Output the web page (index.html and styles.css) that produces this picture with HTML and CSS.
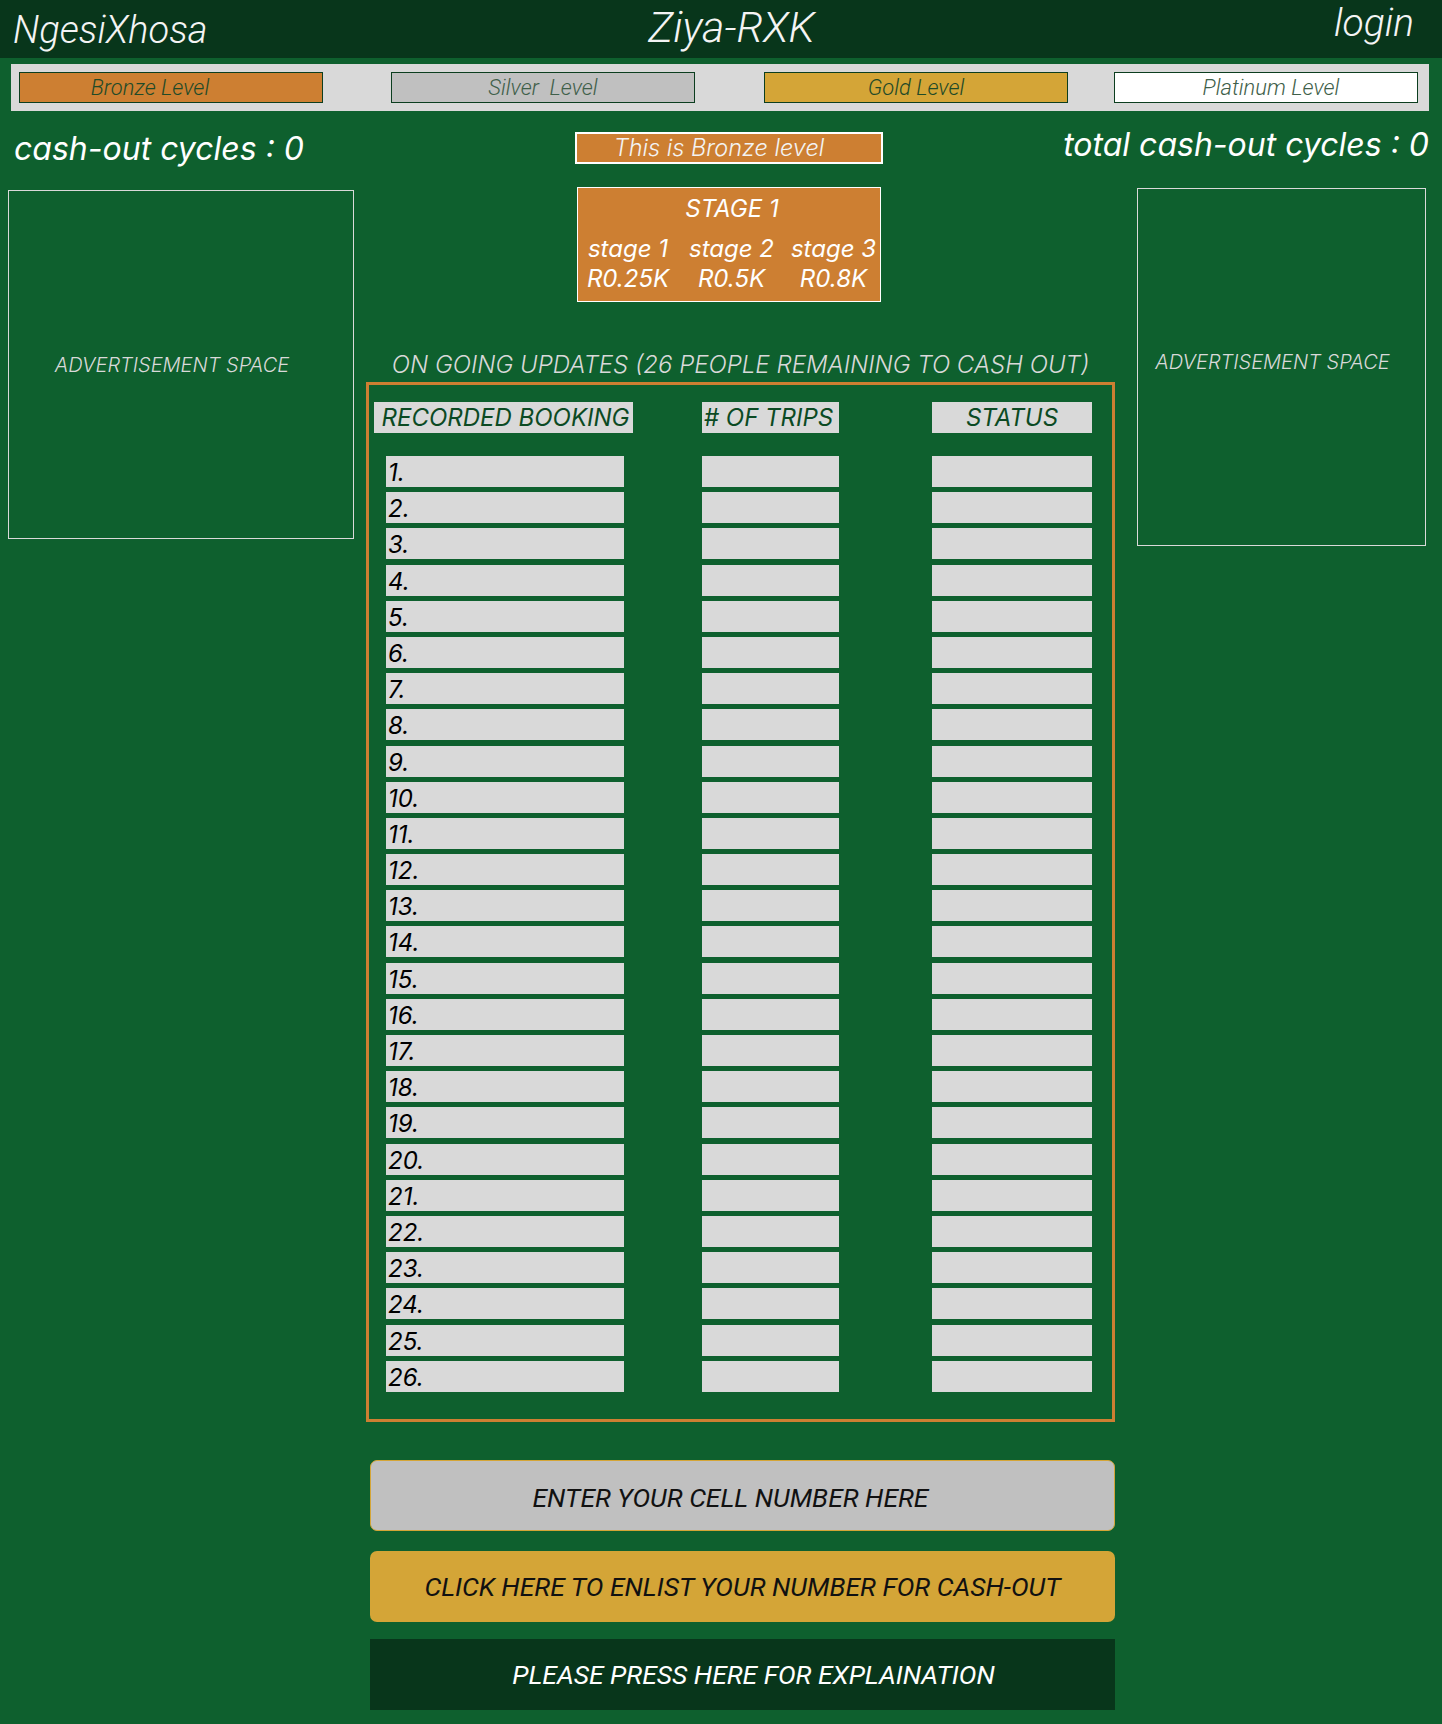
FILE: index.html
```html
<!DOCTYPE html>
<html lang="en">
<head>
<meta charset="utf-8">
<title>Ziya-RXK</title>
<link rel="stylesheet" href="styles.css">
</head>
<body>
<header class="topbar">
  <div class="brand">NgesiXhosa</div>
  <div class="title">Ziya-RXK</div>
  <div class="login">login</div>
</header>

<nav class="levels">
  <div class="level bronze">Bronze Level</div>
  <div class="level silver">Silver&nbsp; Level</div>
  <div class="level gold">Gold Level</div>
  <div class="level platinum">Platinum Level</div>
</nav>

<main class="layout">
  <div class="cycles">cash-out cycles : 0</div>
  <div class="center-top"><div class="level-note">This is Bronze level</div></div>
  <div class="total-wrap"><div class="cycles total">total cash-out cycles : 0</div></div>

  <aside class="ad ad-left">ADVERTISEMENT SPACE</aside>

  <section class="center">
    <div class="stage">
      <div class="stage-title">STAGE 1</div>
      <div class="stage-grid">
        <div>stage 1<br>R0.25K</div>
        <div>stage 2<br>R0.5K</div>
        <div>stage 3<br>R0.8K</div>
      </div>
    </div>

    <h2 class="updates">ON GOING UPDATES (26 PEOPLE REMAINING TO CASH OUT)</h2>

    <div class="board">
      <div class="head-row">
        <div class="hc hc1">RECORDED BOOKING</div>
        <div class="hc hc2"># OF TRIPS</div>
        <div class="hc hc3">STATUS</div>
      </div>
      <div class="rows">
        <div class="row"><div class="c c1">1.</div><div class="c c2"></div><div class="c c3"></div></div>
        <div class="row"><div class="c c1">2.</div><div class="c c2"></div><div class="c c3"></div></div>
        <div class="row"><div class="c c1">3.</div><div class="c c2"></div><div class="c c3"></div></div>
        <div class="row"><div class="c c1">4.</div><div class="c c2"></div><div class="c c3"></div></div>
        <div class="row"><div class="c c1">5.</div><div class="c c2"></div><div class="c c3"></div></div>
        <div class="row"><div class="c c1">6.</div><div class="c c2"></div><div class="c c3"></div></div>
        <div class="row"><div class="c c1">7.</div><div class="c c2"></div><div class="c c3"></div></div>
        <div class="row"><div class="c c1">8.</div><div class="c c2"></div><div class="c c3"></div></div>
        <div class="row"><div class="c c1">9.</div><div class="c c2"></div><div class="c c3"></div></div>
        <div class="row"><div class="c c1">10.</div><div class="c c2"></div><div class="c c3"></div></div>
        <div class="row"><div class="c c1">11.</div><div class="c c2"></div><div class="c c3"></div></div>
        <div class="row"><div class="c c1">12.</div><div class="c c2"></div><div class="c c3"></div></div>
        <div class="row"><div class="c c1">13.</div><div class="c c2"></div><div class="c c3"></div></div>
        <div class="row"><div class="c c1">14.</div><div class="c c2"></div><div class="c c3"></div></div>
        <div class="row"><div class="c c1">15.</div><div class="c c2"></div><div class="c c3"></div></div>
        <div class="row"><div class="c c1">16.</div><div class="c c2"></div><div class="c c3"></div></div>
        <div class="row"><div class="c c1">17.</div><div class="c c2"></div><div class="c c3"></div></div>
        <div class="row"><div class="c c1">18.</div><div class="c c2"></div><div class="c c3"></div></div>
        <div class="row"><div class="c c1">19.</div><div class="c c2"></div><div class="c c3"></div></div>
        <div class="row"><div class="c c1">20.</div><div class="c c2"></div><div class="c c3"></div></div>
        <div class="row"><div class="c c1">21.</div><div class="c c2"></div><div class="c c3"></div></div>
        <div class="row"><div class="c c1">22.</div><div class="c c2"></div><div class="c c3"></div></div>
        <div class="row"><div class="c c1">23.</div><div class="c c2"></div><div class="c c3"></div></div>
        <div class="row"><div class="c c1">24.</div><div class="c c2"></div><div class="c c3"></div></div>
        <div class="row"><div class="c c1">25.</div><div class="c c2"></div><div class="c c3"></div></div>
        <div class="row"><div class="c c1">26.</div><div class="c c2"></div><div class="c c3"></div></div>
      </div>
    </div>

    <div class="actions">
      <div class="btn phone">ENTER YOUR CELL NUMBER HERE</div>
      <div class="btn enlist">CLICK HERE TO ENLIST YOUR NUMBER FOR CASH-OUT</div>
      <div class="btn explain">PLEASE PRESS HERE FOR EXPLAINATION</div>
    </div>
  </section>

  <aside class="ad ad-right">ADVERTISEMENT SPACE</aside>
</main>
</body>
</html>
```

FILE: styles.css
```css
* { box-sizing: border-box; }

html, body {
  margin: 0;
  padding: 0;
}

body {
  background: #0e602e;
  font-family: Inter, "Noto Sans", sans-serif;
  font-style: italic;
  color: #ffffff;
  min-height: 1724px;
}

/* ---------- header ---------- */
.topbar {
  height: 58px;
  background: #08361b;
  display: grid;
  grid-template-columns: 1fr auto 1fr;
  align-items: center;
  padding: 0 28px 0 13px;
  font-family: "Roboto Light", Roboto, "Liberation Sans", sans-serif;
  font-weight: 300;
  color: #f4f4f4;
}

.brand {
  font-size: 38px;
  line-height: 42px;
  justify-self: start;
  margin-top: 2px;
}

.title {
  font-size: 43px;
  line-height: 46px;
  justify-self: center;
  margin-left: 36px;
  margin-top: -4px;
}

.login {
  font-size: 39px;
  line-height: 42px;
  justify-self: end;
  margin-top: -12px;
}

/* ---------- level bar ---------- */
.levels {
  margin: 6px 13px 0 11px;
  height: 47px;
  background: #d9d9d9;
  padding: 8px 11px 8px 8px;
  display: flex;
  align-items: flex-start;
}

.level {
  flex-shrink: 0;
  width: 304px;
  height: 31px;
  border: 1px solid #0c3e1f;
  font-family: "Roboto Light", Roboto, "Liberation Sans", sans-serif;
  font-weight: 300;
  font-size: 22px;
  line-height: 29px;
  text-align: center;
  color: #1f4a28;
}

.bronze { background: #cd7f32; padding-right: 42px; }
.silver { background: #c0c0c0; color: #3f5f4a; margin-left: 68px; }
.gold { background: #d4a537; margin-left: 69px; }
.platinum { background: #ffffff; color: #3f5f4a; margin-left: auto; padding-left: 10px; }

/* ---------- main layout ---------- */
.layout {
  display: grid;
  grid-template-columns: 346px 749px 1fr;
  column-gap: 12px;
  padding: 0 16px 0 8px;
  align-items: start;
}

.cycles {
  font-size: 32px;
  line-height: 30px;
  margin: 23px 0 0 6px;
  white-space: nowrap;
}

.total-wrap {
  display: flex;
  justify-content: flex-end;
  min-width: 0;
}

.cycles.total {
  margin: 19px -3px 0 0;
}

.center-top {
  padding-left: 209px;
  padding-top: 21px;
}

.level-note {
  width: 308px;
  height: 32px;
  border: 2px solid #ffffff;
  background: #cd7f32;
  font-weight: 300;
  font-size: 23.5px;
  line-height: 27px;
  text-align: center;
  padding-right: 20px;
  color: #f3f3f3;
}

/* ---------- ads ---------- */
.ad {
  border: 1px solid #d9d9d9;
  color: #d9d9d9;
  font-weight: 300;
  font-size: 20px;
  display: flex;
  align-items: center;
  justify-content: center;
  white-space: nowrap;
}

.ad-left {
  height: 349px;
  margin-top: 26px;
  padding-right: 18px;
}

.ad-right {
  width: 289px;
  height: 358px;
  margin: 24px 0 0 10px;
  padding-bottom: 10px;
  padding-right: 18px;
}

/* ---------- center column ---------- */
.center {
  display: flex;
  flex-direction: column;
  margin-top: 23px;
}

.stage {
  width: 304px;
  margin-left: 211px;
  border: 1px solid #ffffff;
  background: #cd7f32;
  padding: 5px 0 7px;
  color: #ffffff;
  font-size: 24px;
}

.stage-title {
  line-height: 32px;
  text-align: center;
  margin-bottom: 9px;
  padding-left: 6px;
}

.stage-grid {
  display: grid;
  grid-template-columns: 100px 107px 97px;
  line-height: 30px;
  text-align: center;
  white-space: nowrap;
}

.updates {
  margin: 49px 0 0;
  font-weight: 300;
  font-style: italic;
  font-size: 24px;
  line-height: 28px;
  color: #d9d9d9;
  text-align: center;
  white-space: nowrap;
}

/* ---------- board ---------- */
.board {
  margin-top: 3px;
  border: 3px solid #cd7f32;
  padding: 17px 0 27px 5px;
}

.head-row {
  display: flex;
  margin-bottom: 23px;
}

.hc {
  height: 31px;
  background: #d9d9d9;
  color: #0b4a23;
  font-size: 24px;
  line-height: 31px;
  text-align: center;
  white-space: nowrap;
}

.hc1 { width: 259px; padding-left: 4px; }
.hc2 { width: 137px; margin-left: 69px; padding-right: 4px; }
.hc3 { width: 160px; margin-left: 93px; }

.rows {
  display: flex;
  flex-direction: column;
  gap: 5.2px;
}

.row {
  display: flex;
  height: 31px;
}

.c {
  height: 31px;
  background: #d9d9d9;
}

.c1 {
  width: 238px;
  margin-left: 12px;
  padding-left: 2px;
  color: #000000;
  font-size: 24px;
  line-height: 34px;
}

.c2 { width: 137px; margin-left: 78px; }
.c3 { width: 160px; margin-left: 93px; }

/* ---------- actions ---------- */
.actions {
  margin: 38px 0 0 4px;
  display: flex;
  flex-direction: column;
}

.btn {
  height: 71px;
  display: flex;
  align-items: center;
  justify-content: center;
  font-family: Roboto, "Liberation Sans", sans-serif;
  font-size: 26.5px;
  white-space: nowrap;
}

.phone {
  background: #c0c0c0;
  border: 1px solid #d4a537;
  border-radius: 7px;
  color: #111111;
  padding-right: 24px;
  padding-top: 4px;
}

.enlist {
  margin-top: 20px;
  background: #d4a537;
  border-radius: 7px;
  color: #111111;
}

.explain {
  margin-top: 17px;
  background: #08361b;
  color: #ffffff;
  padding-left: 22px;
}
```
